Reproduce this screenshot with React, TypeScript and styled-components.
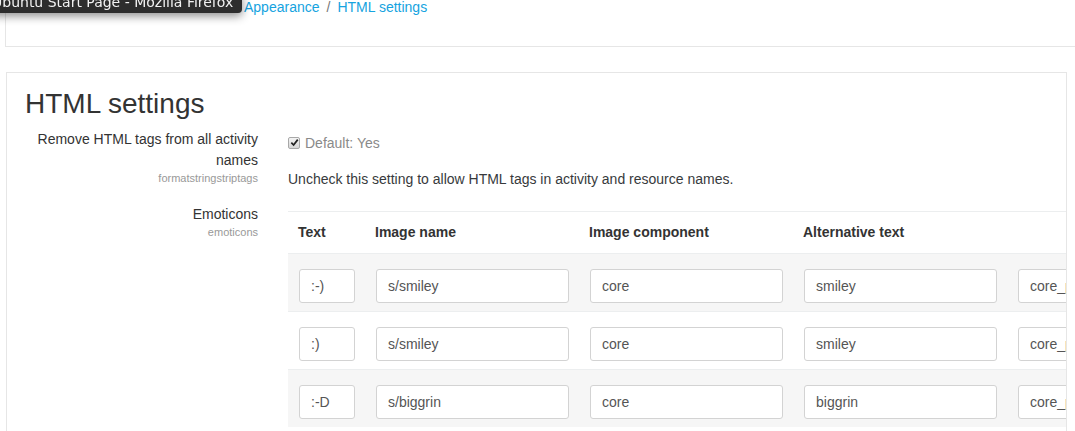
import styled, { createGlobalStyle } from "styled-components";

const GlobalStyle = createGlobalStyle`
  html, body {
    margin: 0;
    padding: 0;
    background: #fff;
    overflow: hidden;
  }
  body {
    font-family: "Liberation Sans", Arial, sans-serif;
    font-size: 14px;
    line-height: 21px;
    color: #373a3c;
  }
  * { box-sizing: border-box; }
`;

// ─── Window chrome ────────────────────────────────────────────────────────────

const Tooltip = styled.div`
  position: fixed;
  left: -10px;
  top: -8px;
  width: 252px;
  height: 21px;
  padding: 0 0 0 2px;
  background: #2d2d2d;
  color: #f2f2f2;
  border-radius: 4px;
  box-shadow: 0 3px 10px rgba(0, 0, 0, 0.45);
  font-family: "DejaVu Sans", "Noto Sans", sans-serif;
  font-size: 14px;
  line-height: 21px;
  white-space: nowrap;
  overflow: hidden;
  z-index: 10;
`;

// ─── Page ─────────────────────────────────────────────────────────────────────

const Page = styled.div`
  position: relative;
  display: flow-root;
  width: 1075px;
  padding-left: 5px;
  overflow: hidden;
`;

const HeaderCard = styled.header`
  margin-top: -40px;
  border: 1px solid #e6e6e6;
  border-right: none;
  padding: 36px 0 29px 238px;
`;

const Crumbs = styled.nav`
  display: flex;
  gap: 7px;
  line-height: 20px;
  color: #777;
`;

const Crumb = styled.a`
  color: #15a3e0;
  text-decoration: none;
`;

const MainCard = styled.section`
  width: 1061px;
  margin: 25px 0 0 1px;
  border: 1px solid #e6e6e6;
  border-bottom: none;
  padding: 13px 0 0 18px;
  overflow: hidden;
  height: 400px;
`;

const Heading = styled.h2`
  margin: 0 0 7px;
  font-size: 28px;
  line-height: 36px;
  font-weight: 400;
  color: #333;
`;

const SettingRow = styled.div<{ $gap?: number }>`
  display: grid;
  grid-template-columns: 233px minmax(0, 1fr);
  column-gap: 30px;
  margin-bottom: ${p => p.$gap ?? 0}px;
`;

const Label = styled.div`
  text-align: right;
  color: #333;
`;

const Name = styled.div`
  font-size: 11px;
  line-height: 14px;
  color: #999;
`;

const Content = styled.div<{ $top?: number }>`
  padding-top: ${p => p.$top ?? 0}px;
  min-width: 0;
  overflow: hidden;
`;

const DefaultLine = styled.div`
  display: flex;
  align-items: center;
  gap: 5px;
  color: #8a8a8a;
`;

const CheckBox = styled.span`
  width: 12px;
  height: 12px;
  border: 1px solid #a8a8a8;
  border-radius: 2px;
  background: linear-gradient(#f4f4f4, #d6d6d6);
  display: inline-flex;
  align-items: center;
  justify-content: center;
  margin-top: -2px;
`;

const Description = styled.p`
  margin: 15px 0 0;
`;

const Table = styled.table`
  margin-top: 7px;
  border-collapse: collapse;
  white-space: nowrap;
`;

const Th = styled.th`
  text-align: left;
  font-weight: 700;
  color: #333;
  padding: 10px 11px 10px 10px;
  border-top: 1px solid #eceeef;
`;

const Tr = styled.tr<{ $striped?: boolean }>`
  background: ${p => (p.$striped ? "#f6f6f6" : "#fff")};
  border-top: 1px solid #eceeef;
`;

const Td = styled.td`
  padding: 15px 10px 8px 11px;
`;

const Input = styled.input<{ $w: number }>`
  display: block;
  width: ${p => p.$w}px;
  height: 34px;
  border: 1px solid #d3d3d3;
  border-radius: 3px;
  padding: 0 11px;
  font-family: "Liberation Sans", Arial, sans-serif;
  font-size: 14px;
  color: #555;
  background: #fff;
  outline: none;
`;

// ─── Data ─────────────────────────────────────────────────────────────────────

const rows = [
  { text: ":-)", image: "s/smiley", component: "core", alt: "smiley", altComp: "core_pix" },
  { text: ":)", image: "s/smiley", component: "core", alt: "smiley", altComp: "core_pix" },
  { text: ":-D", image: "s/biggrin", component: "core", alt: "biggrin", altComp: "core_pix" },
];

export default function App() {
  return (
    <>
      <GlobalStyle />
      <Tooltip>Ubuntu Start Page - Mozilla Firefox</Tooltip>
      <Page>
        <HeaderCard>
          <Crumbs>
            <Crumb href="#">Appearance</Crumb>
            <span>/</span>
            <Crumb href="#">HTML settings</Crumb>
          </Crumbs>
        </HeaderCard>

        <MainCard>
          <Heading>HTML settings</Heading>

          <SettingRow $gap={14}>
            <Label>
              Remove HTML tags from all activity names
              <Name>formatstringstriptags</Name>
            </Label>
            <Content $top={4}>
              <DefaultLine>
                <CheckBox>
                  <svg width="9" height="9" viewBox="0 0 10 10">
                    <path d="M1.5 5.2 L4 7.8 L8.6 1.8" fill="none" stroke="#222" strokeWidth="1.9" />
                  </svg>
                </CheckBox>
                Default: Yes
              </DefaultLine>
              <Description>Uncheck this setting to allow HTML tags in activity and resource names.</Description>
            </Content>
          </SettingRow>

          <SettingRow>
            <Label>
              Emoticons
              <Name>emoticons</Name>
            </Label>
            <Content>
              <Table>
                <thead>
                  <tr>
                    <Th>Text</Th>
                    <Th>Image name</Th>
                    <Th>Image component</Th>
                    <Th>Alternative text</Th>
                    <Th></Th>
                  </tr>
                </thead>
                <tbody>
                  {rows.map((r, i) => (
                    <Tr key={i} $striped={i % 2 === 0}>
                      <Td><Input $w={56} defaultValue={r.text} /></Td>
                      <Td><Input $w={193} defaultValue={r.image} /></Td>
                      <Td><Input $w={193} defaultValue={r.component} /></Td>
                      <Td><Input $w={193} defaultValue={r.alt} /></Td>
                      <Td><Input $w={193} defaultValue={r.altComp} /></Td>
                    </Tr>
                  ))}
                </tbody>
              </Table>
            </Content>
          </SettingRow>
        </MainCard>
      </Page>
    </>
  );
}
